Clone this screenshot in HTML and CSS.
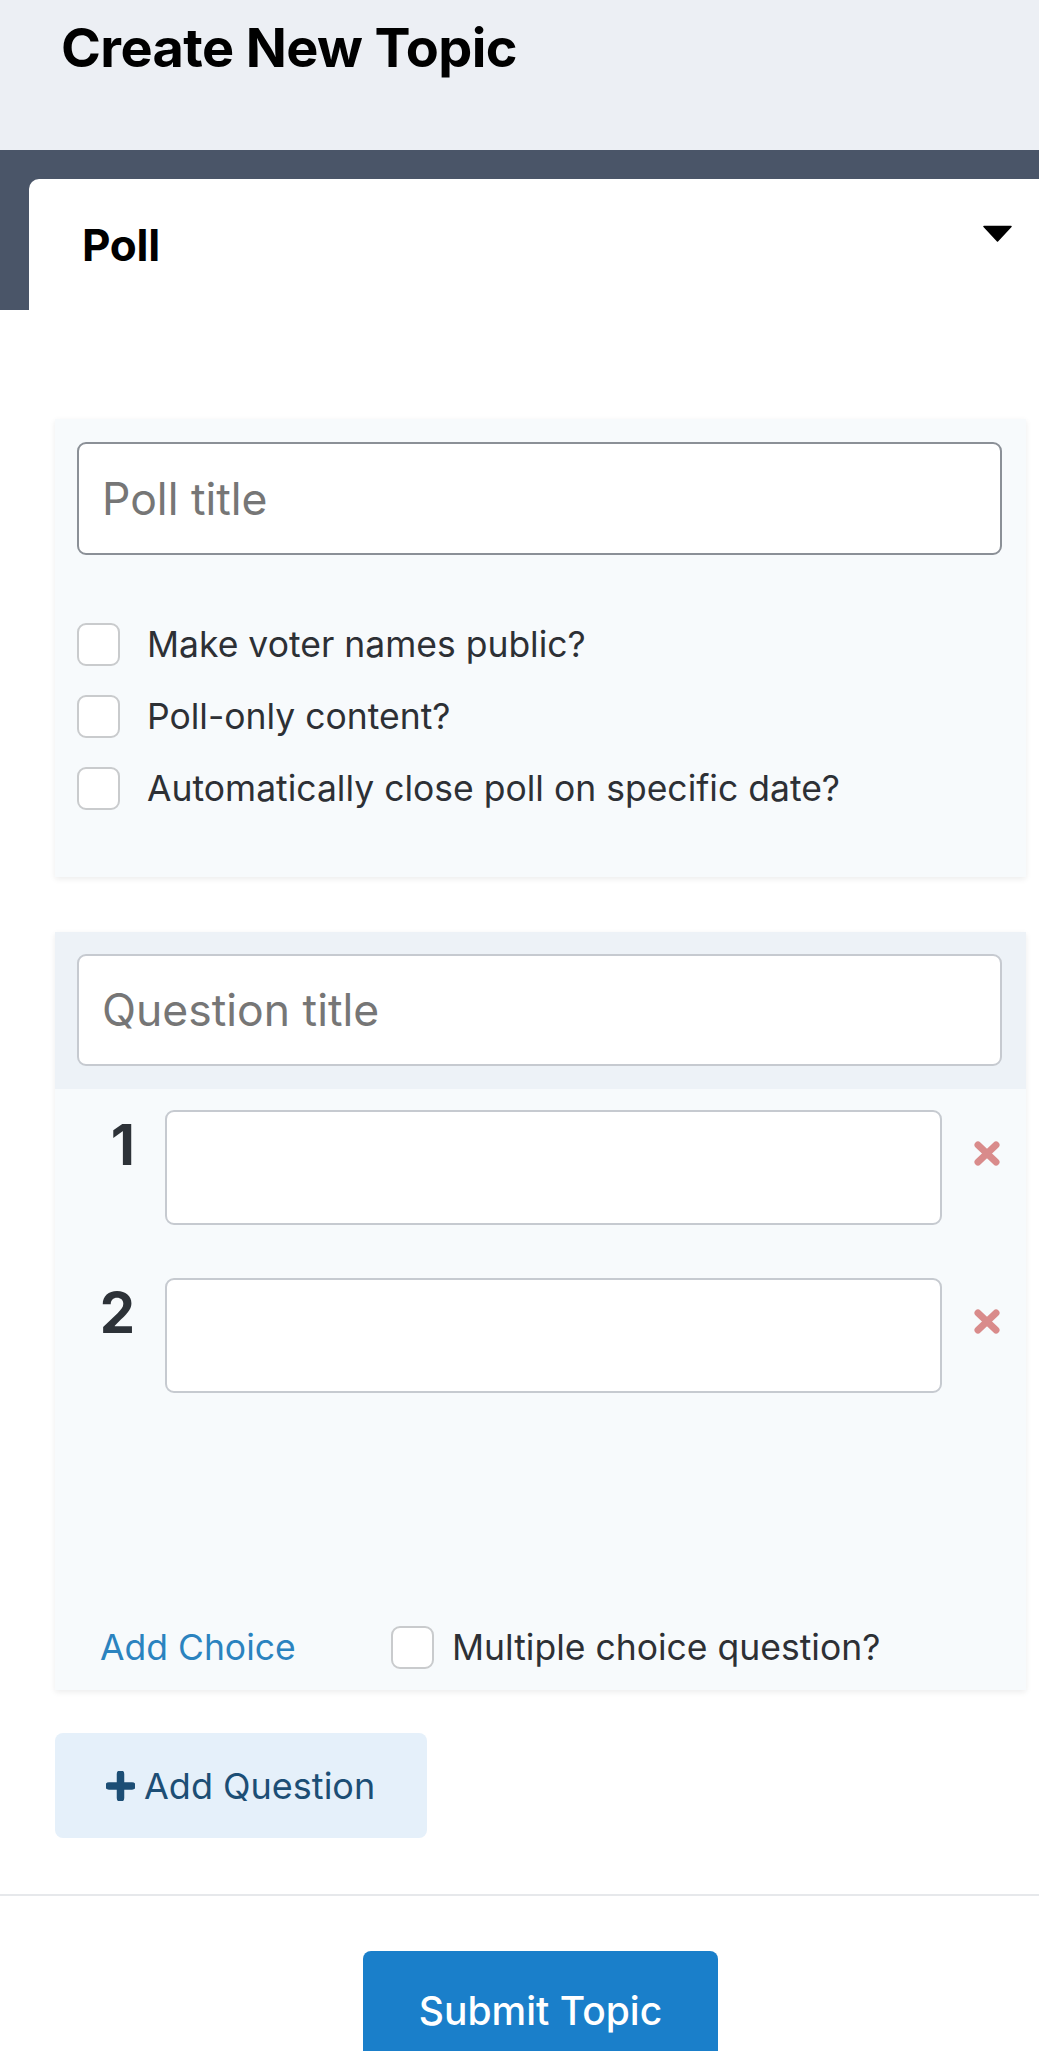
FILE: index.html
```html
<!DOCTYPE html>
<html lang="en">
<head>
<meta charset="utf-8">
<title>Create New Topic</title>
<link rel="stylesheet" href="styles.css">
</head>
<body>
<header class="page-header">
  <h1 class="page-title">Create New Topic</h1>
</header>
<div class="tab-band">
  <div class="tab-head">
    <span class="tab-title">Poll</span>
    <svg class="caret" width="29" height="17" viewBox="0 0 29 17"><path d="M1 1.5 H28 L14.5 16 Z" fill="#000" stroke="#000" stroke-width="1.5" stroke-linejoin="round"/></svg>
  </div>
</div>
<main class="content">
  <section class="card poll-card">
    <div class="text-input strong"><span class="placeholder">Poll title</span></div>
    <div class="options">
      <label class="check-row"><span class="box"></span><span>Make voter names public?</span></label>
      <label class="check-row"><span class="box"></span><span>Poll-only content?</span></label>
      <label class="check-row"><span class="box"></span><span>Automatically close poll on specific date?</span></label>
    </div>
  </section>

  <section class="card question-card">
    <div class="question-head">
      <div class="text-input"><span class="placeholder">Question title</span></div>
    </div>
    <div class="choices">
      <div class="choice-row">
        <span class="choice-num">1</span>
        <div class="choice-input"></div>
        <svg class="remove" width="28" height="25" viewBox="0 0 28 25"><path d="M5 4 L23 21 M23 4 L5 21" stroke="#d98b8b" stroke-width="7" stroke-linecap="round"/></svg>
      </div>
      <div class="choice-row">
        <span class="choice-num">2</span>
        <div class="choice-input"></div>
        <svg class="remove" width="28" height="25" viewBox="0 0 28 25"><path d="M5 4 L23 21 M23 4 L5 21" stroke="#d98b8b" stroke-width="7" stroke-linecap="round"/></svg>
      </div>
      <div class="choice-footer">
        <a class="add-choice">Add Choice</a>
        <label class="check-row tight"><span class="box"></span><span>Multiple choice question?</span></label>
      </div>
    </div>
  </section>

  <button class="add-question"><svg width="29" height="30" viewBox="0 0 29 30"><path d="M14.5 3 V27 M3 15 H26" stroke="#1c4e75" stroke-width="7.5" stroke-linecap="round"/></svg><span>Add Question</span></button>
</main>
<hr class="divider">
<div class="submit-wrap">
  <button class="submit">Submit Topic</button>
</div>
</body>
</html>
```
FILE: styles.css
```css
* { box-sizing: border-box; }
html, body { margin: 0; padding: 0; }
body {
  font-family: Inter, "Noto Sans", "Liberation Sans", sans-serif;
  background: #fff;
  color: #2d3748;
}
.page-header {
  background: #eceff4;
  height: 150px;
  padding: 21px 0 0 61px;
}
.page-title {
  margin: 0;
  font-size: 54px;
  line-height: 1;
  font-weight: 700;
  letter-spacing: -0.6px;
  color: #000;
}
.tab-band {
  background: #4a5568;
  padding: 29px 0 0 29px;
}
.tab-head {
  background: #fff;
  border-top-left-radius: 10px;
  height: 131px;
  display: flex;
  justify-content: space-between;
  align-items: center;
  padding: 0 27px 0 53px;
}
.tab-title {
  font-size: 44px;
  font-weight: 700;
  color: #000;
  letter-spacing: -0.3px;
}
.caret { align-self: flex-start; margin-top: 46px; }
.content {
  padding: 109px 13px 0 55px;
}
.card {
  background: #f7fafc;
  box-shadow: 0 2px 6px rgba(0,0,0,0.08);
}
.poll-card {
  padding: 23px 24px 67px 22px;
}
.text-input {
  height: 113px;
  background: #fff;
  border: 2px solid #c6cad0;
  border-radius: 9px;
  display: flex;
  align-items: center;
  padding-left: 23px;
}
.text-input.strong { border-color: #8b9097; }
.placeholder {
  font-size: 44.5px;
  color: #767676;
}
.options {
  margin-top: 68px;
  display: flex;
  flex-direction: column;
  gap: 29px;
}
.check-row {
  display: flex;
  align-items: center;
  gap: 27px;
  font-size: 35.5px;
  color: #2d3035;
  height: 43px;
}
.check-row.tight { gap: 18px; }
.box {
  width: 43px;
  height: 43px;
  flex: none;
  border: 2px solid #c9cbcd;
  border-radius: 9px;
  background: #fff;
}
.question-card {
  margin-top: 55px;
}
.question-head {
  background: #edf2f7;
  padding: 22px 24px 23px 22px;
}
.question-head .text-input { height: 112px; }
.choices {
  padding: 21px 25px 21px 22px;
}
.choice-row {
  display: flex;
  align-items: flex-start;
  margin-bottom: 53px;
}
.choice-num {
  width: 58px;
  text-align: right;
  font-size: 56px;
  font-weight: 700;
  line-height: 1;
  margin-top: 7px;
  margin-right: 30px;
  color: #2d3238;
}
.choice-input {
  flex: 1;
  height: 115px;
  background: #fff;
  border: 2px solid #c6cad0;
  border-radius: 9px;
}
.remove {
  margin-left: 31px;
  margin-top: 31px;
  flex: none;
}
.choice-footer {
  margin-top: 233px;
  display: flex;
  align-items: center;
  padding-left: 23px;
  height: 43px;
}
.add-choice {
  font-size: 35.5px;
  color: #2b83bf;
  width: 291px;
  flex: none;
}
.add-question {
  margin-top: 43px;
  width: 372px;
  height: 105px;
  border: none;
  border-radius: 8px;
  background: #e5f0fa;
  color: #1c4e75;
  font-family: inherit;
  font-size: 36px;
  display: flex;
  align-items: center;
  padding: 0 0 0 51px;
  gap: 9px;
}
.divider {
  margin: 56px 0 0 0;
  border: none;
  border-top: 2px solid #e6e8eb;
}
.submit-wrap {
  padding: 55px 13px 0 55px;
  display: flex;
  justify-content: center;
}
.submit {
  width: 355px;
  height: 120px;
  border: none;
  border-radius: 8px;
  background: #1a7fca;
  color: #fff;
  font-family: inherit;
  font-size: 39px;
  font-weight: 500;
  line-height: 1;
  display: flex;
  align-items: flex-start;
  justify-content: center;
  padding-top: 40px;
}
```
